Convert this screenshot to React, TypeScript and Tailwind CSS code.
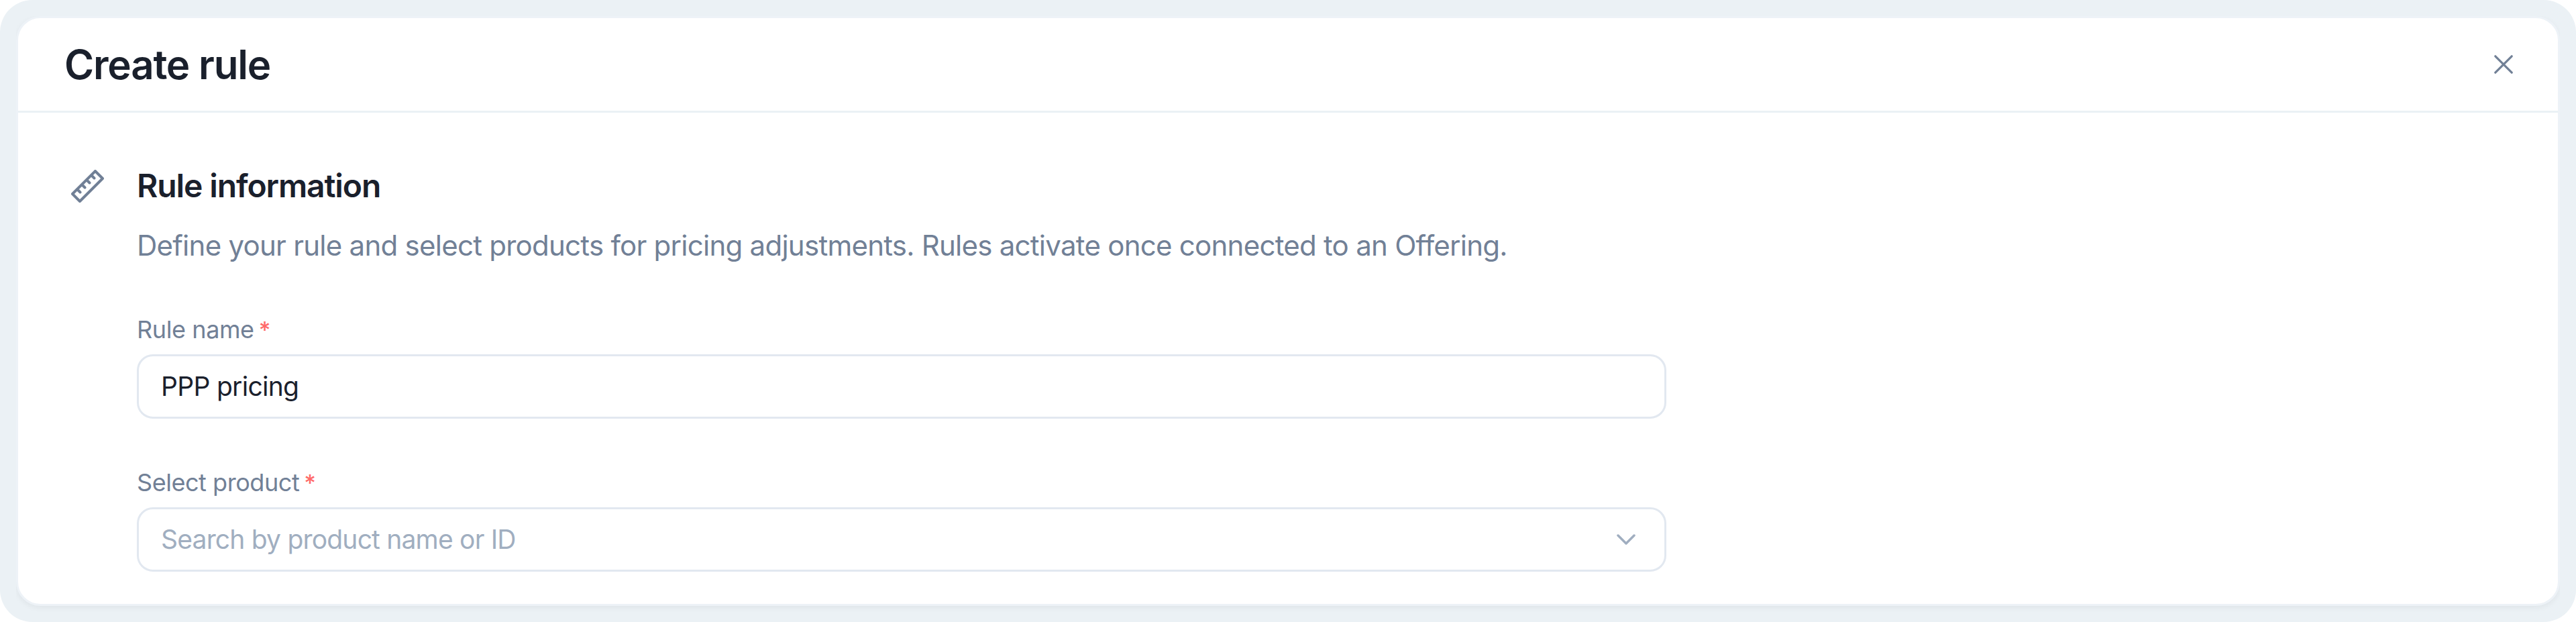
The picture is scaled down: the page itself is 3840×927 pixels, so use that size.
import React from "react";

function Required() {
  return <span className="ml-[7px] inline-block text-[34px] font-medium tracking-normal text-[#ff6b6b]">*</span>;
}

export default function App() {
  return (
    <div className="h-[927px] w-[3840px] overflow-hidden rounded-[48px] bg-[#ebf1f5] p-6 font-['Inter',sans-serif] antialiased">
      <div className="[clip-path:inset(0_0_-24px_0)]">
        <main className="h-[879px] rounded-[36px] border-[3px] border-[#edf2f7] bg-white shadow-[0_3px_9px_rgba(0,0,0,0.05)]">
          <header className="flex h-[141px] items-center justify-between border-b-[3px] border-[#ebf1f5] pr-[67px] pl-[69px]">
            <h1 className="text-[60px] leading-none font-semibold tracking-[-1.2px] text-[#1a202c]">Create rule</h1>
            <svg width="28" height="28" viewBox="0 0 28 28" fill="none" stroke="#718096" strokeWidth="3.2" strokeLinecap="round">
              <path d="M1.8 1.8 26.2 26.2M26.2 1.8 1.8 26.2" />
            </svg>
          </header>
          <section className="flex gap-[49px] pt-[84px] pl-[79px]">
            <svg className="mt-px shrink-0" width="49" height="49" viewBox="0 0 49 49" fill="none" stroke="#718096" strokeWidth="4" strokeLinecap="round" strokeLinejoin="round">
              <path d="M36 2 47 13 13 47 2 36ZM9 29 13.500 33.500M16 22 20.500 26.500M23 15 27.500 19.500M30 8 34.500 12.500" />
            </svg>
            <div className="w-[2280px]">
              <h2 className="text-[48px] leading-[50px] font-semibold tracking-[-1.1px] text-[#1a202c]">Rule information</h2>
              <p className="mt-[37px] text-[42px] leading-[54px] tracking-[-0.74px] whitespace-nowrap text-[#718096]">
                Define your rule and select products for pricing adjustments. Rules activate once connected to an Offering.
              </p>
              <div className="mt-[74px] h-[48px] text-[36px] leading-[48px] tracking-[-0.4px] text-[#718096]">
                Rule name<Required />
              </div>
              <div className="mt-[13px] flex h-[96px] items-center rounded-[24px] border-[3px] border-[#e2e8f0] px-[33px] text-[39px] tracking-[-0.7px] text-[#1a202c]">
                PPP pricing
              </div>
              <div className="mt-[71px] h-[48px] text-[36px] leading-[48px] tracking-[-0.45px] text-[#718096]">
                Select product<Required />
              </div>
              <div className="mt-[13px] flex h-[96px] items-center justify-between rounded-[24px] border-[3px] border-[#e2e8f0] pr-[43px] pl-[33px] text-[39px] tracking-[-0.8px] text-[#a0aec0]">
                Search by product name or ID
                <svg width="28" height="17" viewBox="0 0 28 17" fill="none" stroke="#a0aec0" strokeWidth="3.5" strokeLinecap="round" strokeLinejoin="round">
                  <path d="M2 2 14 14 26 2" />
                </svg>
              </div>
            </div>
          </section>
        </main>
      </div>
    </div>
  );
}
